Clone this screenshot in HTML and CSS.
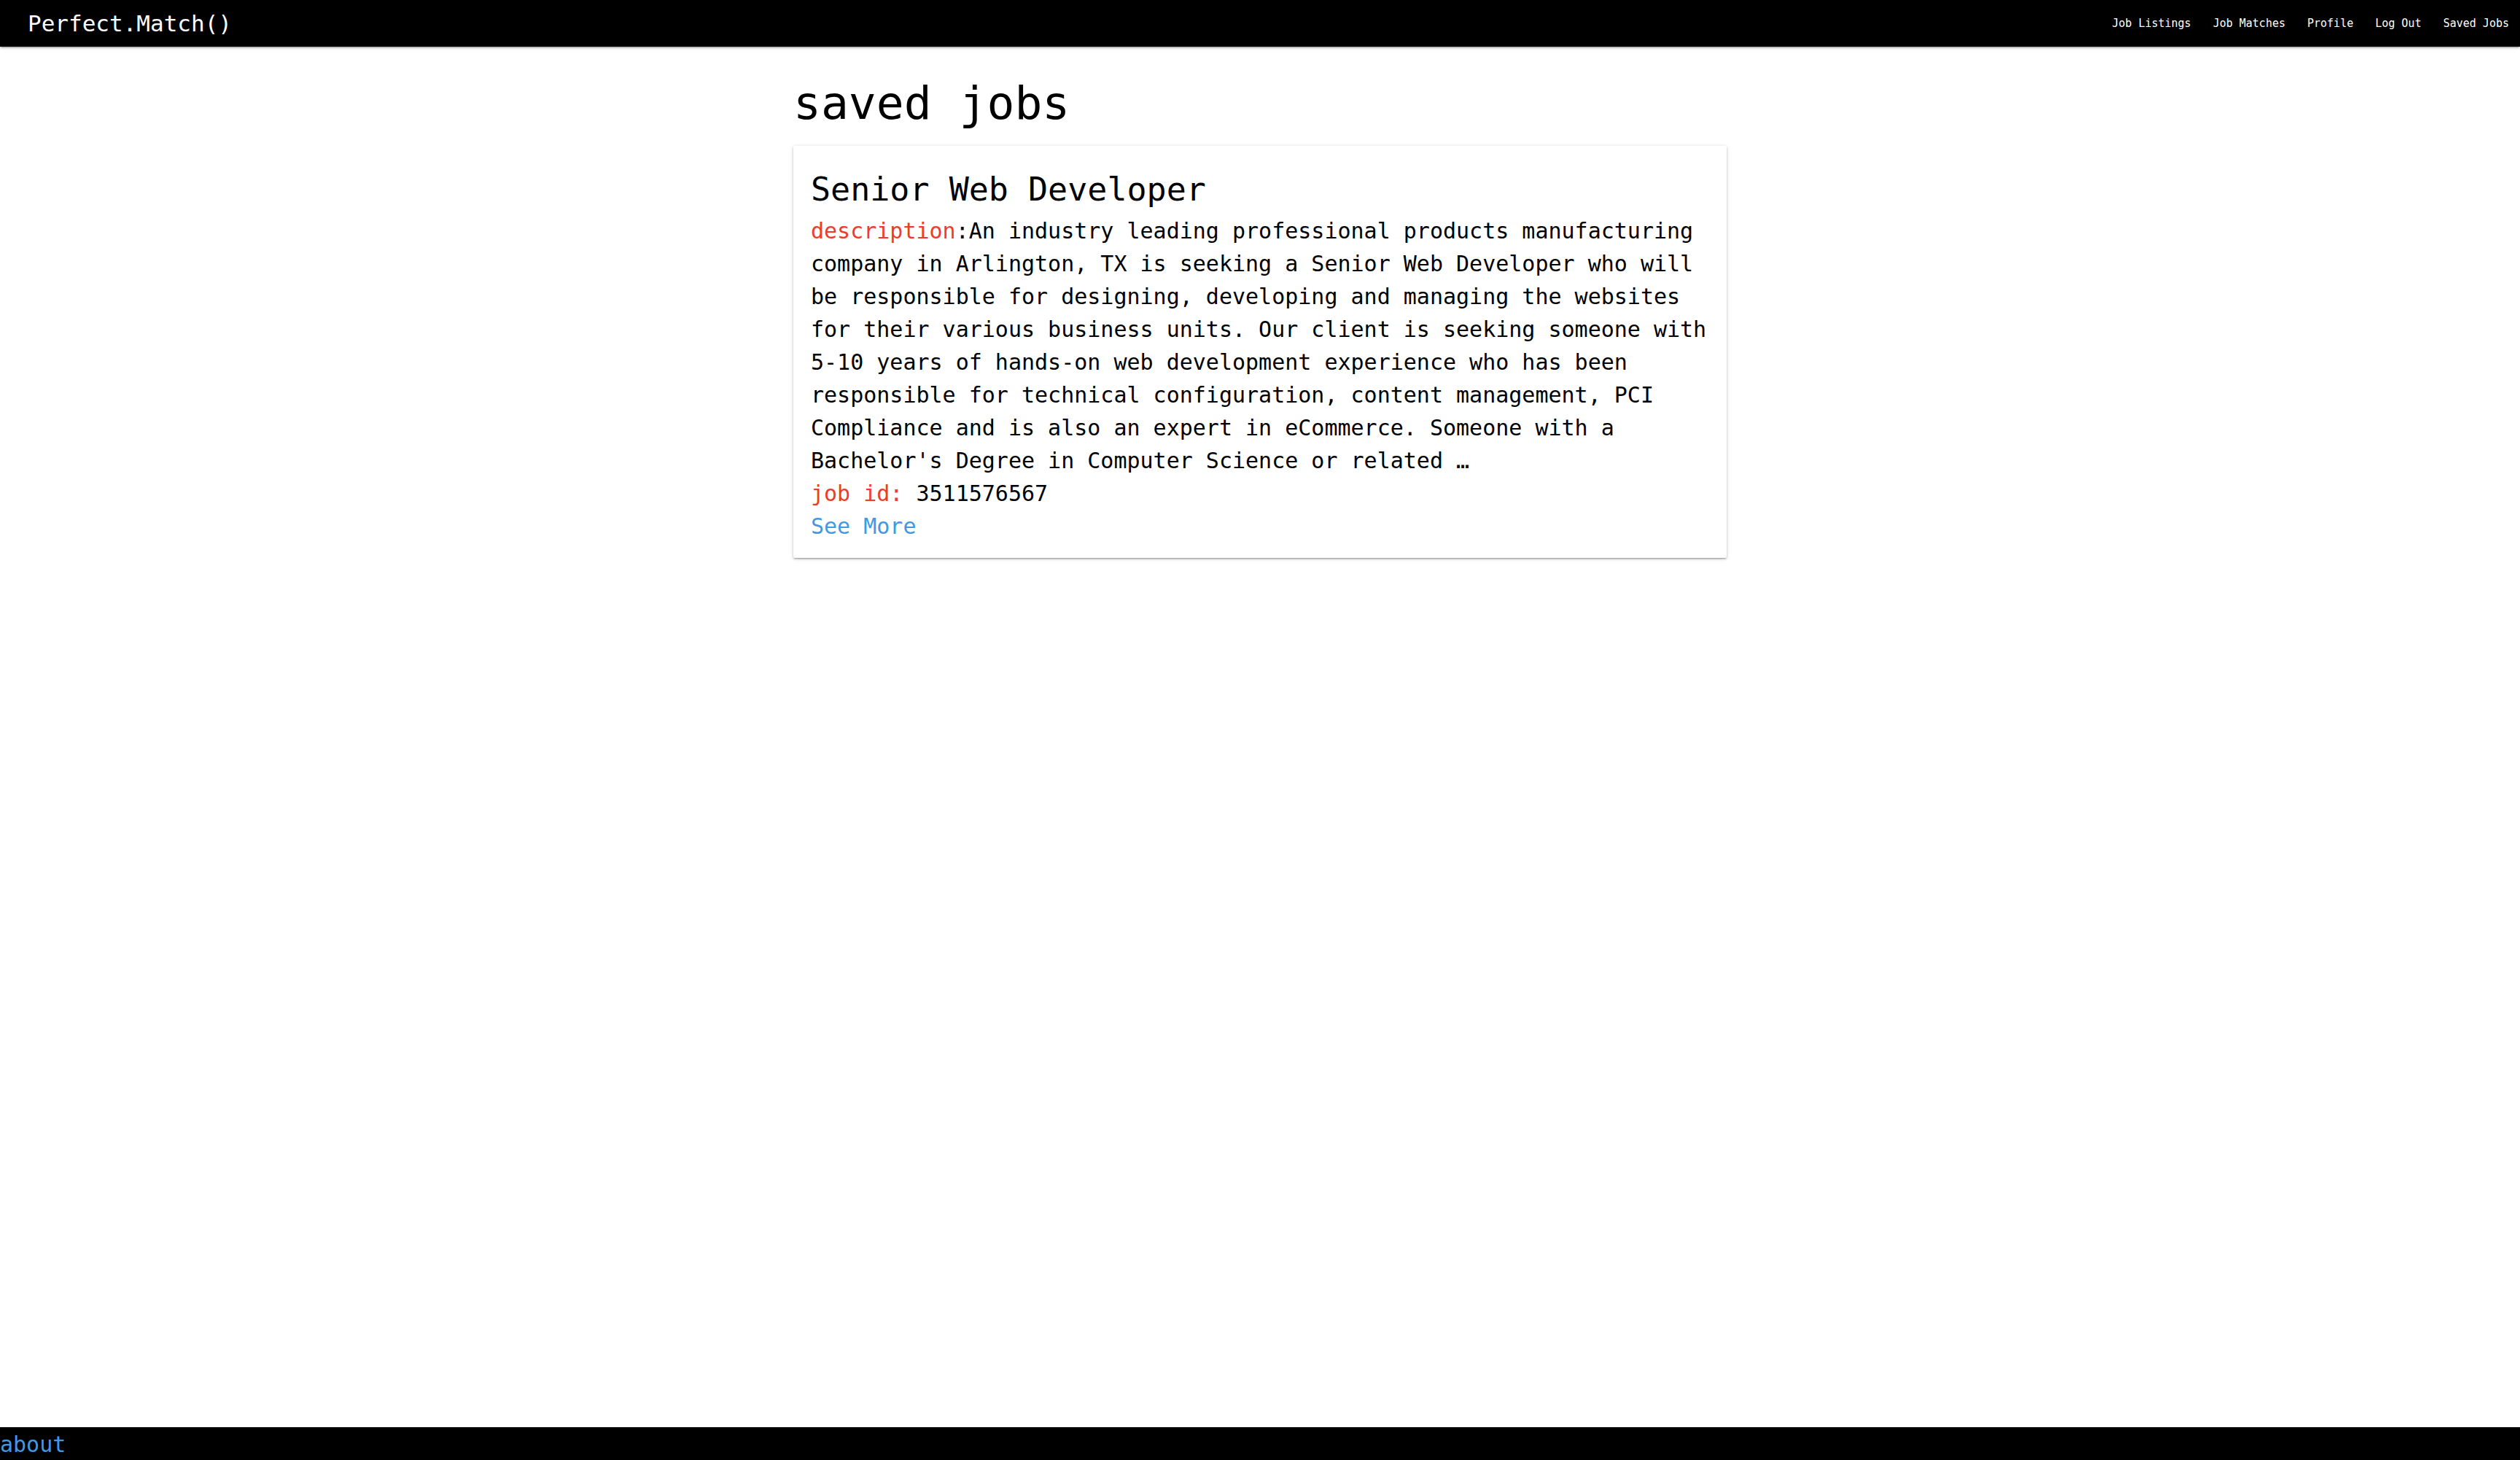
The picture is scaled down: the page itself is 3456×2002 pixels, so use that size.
FILE: index.html
```html
<!DOCTYPE html>
<html lang="en">
<head>
<meta charset="utf-8">
<title>Perfect.Match() - saved jobs</title>
<link rel="stylesheet" href="styles.css">
</head>
<body>
<nav class="navbar">
  <a class="brand" href="#">Perfect.Match()</a>
  <ul class="nav-links">
    <li><a href="#">Job Listings</a></li>
    <li><a href="#">Job Matches</a></li>
    <li><a href="#">Profile</a></li>
    <li><a href="#">Log Out</a></li>
    <li><a href="#">Saved Jobs</a></li>
  </ul>
</nav>
<main class="main">
  <div class="container">
    <h1 class="page-title">saved jobs</h1>
    <div class="card">
      <div class="card-content">
        <h2 class="card-title">Senior Web Developer</h2>
        <p class="desc"><span class="label">description</span>:An industry leading professional products manufacturing company in Arlington, TX is seeking a Senior Web Developer who will be responsible for designing, developing and managing the websites for their various business units. Our client is seeking someone with 5-10 years of hands-on web development experience who has been responsible for technical configuration, content management, PCI Compliance and is also an expert in eCommerce. Someone with a Bachelor's Degree in Computer Science or related …</p>
        <p class="jobid"><span class="label">job id:</span> 3511576567</p>
        <p class="more"><a href="#" class="link">See More</a></p>
      </div>
    </div>
  </div>
</main>
<footer class="footer">
  <a href="#" class="link">about</a>
</footer>
</body>
</html>
```
FILE: styles.css
```css
* { box-sizing: border-box; }
html, body { margin: 0; padding: 0; }
body {
  font-family: "DejaVu Sans Mono", "Liberation Mono", monospace;
  color: #000;
  background: #fff;
  min-height: 100vh;
  display: flex;
  flex-direction: column;
}
a { text-decoration: none; }

.navbar {
  height: 64px;
  background: #000;
  display: flex;
  align-items: center;
  justify-content: space-between;
  padding-left: 38px;
  box-shadow: 0 2px 2px 0 rgba(0,0,0,.14), 0 3px 1px -2px rgba(0,0,0,.12), 0 1px 5px 0 rgba(0,0,0,.2);
  position: relative;
  z-index: 2;
}
.brand {
  color: #fff;
  font-size: 31px;
  line-height: 64px;
}
.nav-links {
  list-style: none;
  margin: 0;
  padding: 0;
  display: flex;
}
.nav-links a {
  display: block;
  color: #fff;
  font-size: 15px;
  line-height: 64px;
  padding: 0 15px;
}

.main { flex: 1; }
.container {
  width: 1280px;
  margin: 0 auto;
}
.page-title {
  font-size: 63px;
  font-weight: normal;
  line-height: 72px;
  margin: 42px 0 22px;
}
.card {
  background: #fff;
  border-radius: 2px;
  box-shadow: 0 2px 2px 0 rgba(0,0,0,.14), 0 3px 1px -2px rgba(0,0,0,.12), 0 1px 5px 0 rgba(0,0,0,.2);
}
.card-content {
  padding: 26px 24px 21px;
}
.card-title {
  font-size: 45px;
  font-weight: normal;
  line-height: 68px;
  margin: 0;
}
.desc, .jobid, .more {
  font-size: 30px;
  line-height: 45px;
  margin: 0;
}
.label { color: #ef3b2c; }
.link { color: #4299e1; }

.footer {
  height: 45px;
  background: #000;
  font-size: 30px;
  line-height: 43px;
  padding-top: 2px;
}
```
